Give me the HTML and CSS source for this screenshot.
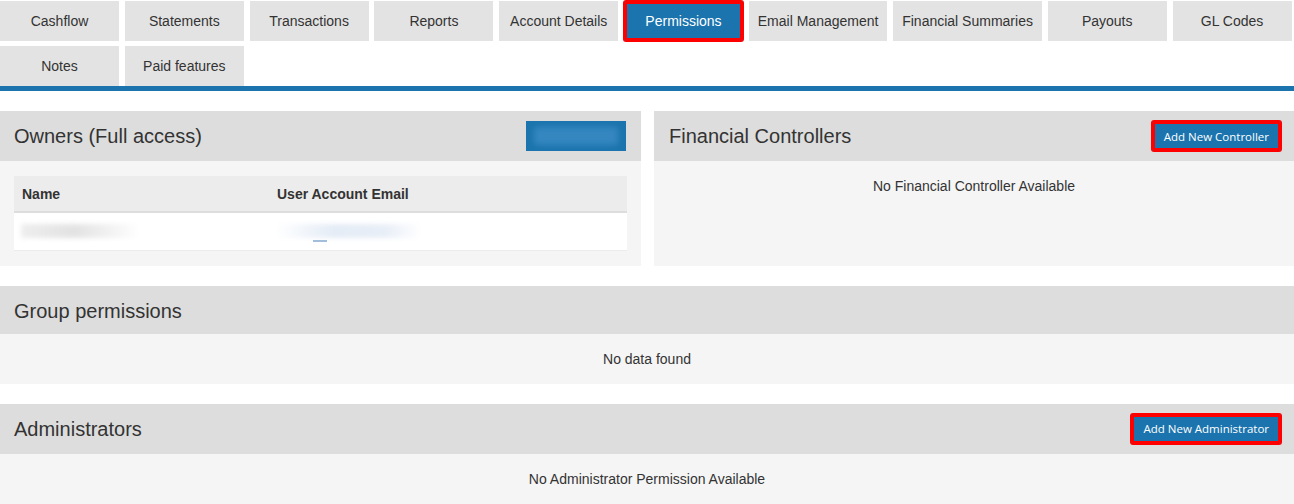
FILE: index.html
```html
<!DOCTYPE html>
<html lang="en">
<head>
<meta charset="utf-8">
<title>Permissions</title>
<link rel="stylesheet" href="styles.css">
</head>
<body>
<nav class="tabs">
  <a class="tab">Cashflow</a>
  <a class="tab">Statements</a>
  <a class="tab">Transactions</a>
  <a class="tab">Reports</a>
  <a class="tab">Account Details</a>
  <a class="tab active">Permissions</a>
  <a class="tab">Email Management</a>
  <a class="tab">Financial Summaries</a>
  <a class="tab">Payouts</a>
  <a class="tab">GL Codes</a>
  <a class="tab">Notes</a>
  <a class="tab">Paid features</a>
</nav>

<main class="content">
  <div class="row-two">
    <section class="panel">
      <header class="panel-head">
        <h2 class="panel-title">Owners (Full access)</h2>
        <span class="btn btn-blurred"><span class="blur-inner"></span></span>
      </header>
      <div class="panel-body">
        <table class="grid">
          <thead>
            <tr><th class="col-name">Name</th><th>User Account Email</th></tr>
          </thead>
          <tbody>
            <tr>
              <td><span class="redact redact-name"></span></td>
              <td><span class="redact redact-email"></span><span class="email-frag"></span></td>
            </tr>
          </tbody>
        </table>
      </div>
    </section>

    <section class="panel">
      <header class="panel-head">
        <h2 class="panel-title">Financial Controllers</h2>
        <button class="btn btn-marked">Add New Controller</button>
      </header>
      <div class="panel-body empty">No Financial Controller Available</div>
    </section>
  </div>

  <section class="panel">
    <header class="panel-head plain">
      <h2 class="panel-title">Group permissions</h2>
    </header>
    <div class="panel-body empty">No data found</div>
  </section>

  <section class="panel">
    <header class="panel-head">
      <h2 class="panel-title">Administrators</h2>
      <button class="btn btn-marked">Add New Administrator</button>
    </header>
    <div class="panel-body empty">No Administrator Permission Available</div>
  </section>
</main>
</body>
</html>
```

FILE: styles.css
```css
* { box-sizing: border-box; }

html, body {
  margin: 0;
  padding: 0;
  background: #ffffff;
}

body {
  font-family: "Liberation Sans", Arial, sans-serif;
  font-size: 14px;
  color: #333333;
  overflow: hidden;
}

/* ---------- tabs ---------- */
.tabs {
  display: flex;
  flex-wrap: wrap;
  column-gap: 5.8px;
  row-gap: 5px;
  padding-top: 1px;
  border-bottom: 5px solid #1b74ad;
}

.tab {
  display: flex;
  align-items: center;
  justify-content: center;
  height: 40px;
  min-width: 119px;
  padding: 0 9px;
  background: #e3e3e3;
  color: #333333;
  font-size: 14px;
  white-space: nowrap;
  text-decoration: none;
}

.tab.active {
  background: #1b74ad;
  color: #ffffff;
  border-radius: 2px;
  box-shadow: 0 0 0 1px #ff0000, inset 0 0 0 3px #ff0000;
}

/* ---------- content ---------- */
.content {
  display: flex;
  flex-direction: column;
  gap: 20px;
  padding-top: 20px;
}

.row-two {
  display: grid;
  grid-template-columns: 641px 1fr;
  column-gap: 13px;
}

.panel {
  display: flex;
  flex-direction: column;
  background: #f5f5f5;
}

.panel-head {
  display: flex;
  align-items: center;
  justify-content: space-between;
  background: #dddddd;
  padding: 10px 13px 10px 14px;
  min-height: 50px;
}

.panel-head.plain {
  min-height: 48px;
  padding: 11px 14px 9px 14px;
}

.row-two .panel:last-child .panel-head {
  padding-left: 15px;
}

.panel-title {
  margin: 0;
  font-size: 20px;
  font-weight: normal;
  line-height: 28px;
  color: #333333;
}

.panel-body {
  flex: 1;
  padding: 15px 14px 15px 14px;
}

.panel-body.empty {
  text-align: center;
  line-height: 20px;
  font-size: 14px;
  color: #333333;
}

/* ---------- buttons ---------- */
.btn {
  display: inline-flex;
  align-items: center;
  justify-content: center;
  height: 30px;
  padding: 0 12px;
  border: 0;
  border-radius: 2px;
  background: #1b74ad;
  color: #ffffff;
  font-family: "Open Sans", "Liberation Sans", sans-serif;
  font-size: 11.5px;
  font-weight: 500;
  white-space: nowrap;
}

.btn-marked {
  box-shadow: 0 0 0 1px #ff0000, inset 0 0 0 3px #ff0000;
}

.btn-blurred {
  width: 100px;
  margin-right: 2px;
  border-radius: 0;
  padding: 0;
  overflow: hidden;
}

.blur-inner {
  display: block;
  width: 84px;
  height: 18px;
  background: #3587c0;
  filter: blur(3px);
}

/* ---------- table ---------- */
.grid {
  width: 100%;
  border-collapse: collapse;
  background: #ffffff;
}

.grid th {
  background: #ececec;
  text-align: left;
  font-weight: bold;
  font-size: 14px;
  height: 36px;
  padding: 0 8px;
  border-bottom: 2px solid #dddddd;
}

.grid .col-name {
  width: 255px;
}

.grid td {
  height: 38px;
  padding: 0 8px 0 7px;
  border-bottom: 1px solid #ececec;
  position: relative;
}

.redact {
  display: block;
  height: 14px;
  filter: blur(2.5px);
}

.redact-name {
  width: 118px;
  background: linear-gradient(90deg, #eeeeee 0%, #e2e2e2 45%, #ffffff 100%);
}

.redact-email {
  width: 145px;
  background: linear-gradient(90deg, #ffffff 0%, #e4ecf6 40%, #e8eef7 75%, #ffffff 100%);
}

.email-frag {
  position: absolute;
  left: 44px;
  top: 27px;
  width: 14px;
  height: 2px;
  background: #4a7fb8;
  opacity: 0.5;
}
```
